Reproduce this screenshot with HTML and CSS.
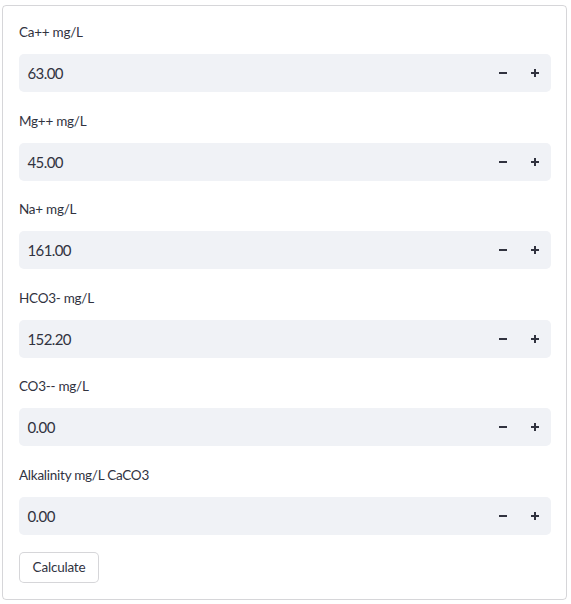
FILE: index.html
```html
<!DOCTYPE html>
<html>
<head>
<meta charset="utf-8">
<link rel="stylesheet" href="styles.css">
</head>
<body>
<form class="form">
  <div class="field">
    <label class="label">Ca++ mg/L</label>
    <div class="input">
      <span class="value">63.00</span>
      <button type="button" class="step"><svg width="10" height="10" viewBox="0 0 10 10"><path d="M1 5h8" stroke="#31333f" stroke-width="2"/></svg></button>
      <button type="button" class="step"><svg width="10" height="10" viewBox="0 0 10 10"><path d="M1 5h8M5 1v8" stroke="#31333f" stroke-width="2"/></svg></button>
    </div>
  </div>
  <div class="field">
    <label class="label">Mg++ mg/L</label>
    <div class="input">
      <span class="value">45.00</span>
      <button type="button" class="step"><svg width="10" height="10" viewBox="0 0 10 10"><path d="M1 5h8" stroke="#31333f" stroke-width="2"/></svg></button>
      <button type="button" class="step"><svg width="10" height="10" viewBox="0 0 10 10"><path d="M1 5h8M5 1v8" stroke="#31333f" stroke-width="2"/></svg></button>
    </div>
  </div>
  <div class="field">
    <label class="label">Na+ mg/L</label>
    <div class="input">
      <span class="value">161.00</span>
      <button type="button" class="step"><svg width="10" height="10" viewBox="0 0 10 10"><path d="M1 5h8" stroke="#31333f" stroke-width="2"/></svg></button>
      <button type="button" class="step"><svg width="10" height="10" viewBox="0 0 10 10"><path d="M1 5h8M5 1v8" stroke="#31333f" stroke-width="2"/></svg></button>
    </div>
  </div>
  <div class="field">
    <label class="label">HCO3- mg/L</label>
    <div class="input">
      <span class="value">152.20</span>
      <button type="button" class="step"><svg width="10" height="10" viewBox="0 0 10 10"><path d="M1 5h8" stroke="#31333f" stroke-width="2"/></svg></button>
      <button type="button" class="step"><svg width="10" height="10" viewBox="0 0 10 10"><path d="M1 5h8M5 1v8" stroke="#31333f" stroke-width="2"/></svg></button>
    </div>
  </div>
  <div class="field">
    <label class="label">CO3-- mg/L</label>
    <div class="input">
      <span class="value">0.00</span>
      <button type="button" class="step"><svg width="10" height="10" viewBox="0 0 10 10"><path d="M1 5h8" stroke="#31333f" stroke-width="2"/></svg></button>
      <button type="button" class="step"><svg width="10" height="10" viewBox="0 0 10 10"><path d="M1 5h8M5 1v8" stroke="#31333f" stroke-width="2"/></svg></button>
    </div>
  </div>
  <div class="field">
    <label class="label">Alkalinity mg/L CaCO3</label>
    <div class="input">
      <span class="value">0.00</span>
      <button type="button" class="step"><svg width="10" height="10" viewBox="0 0 10 10"><path d="M1 5h8" stroke="#31333f" stroke-width="2"/></svg></button>
      <button type="button" class="step"><svg width="10" height="10" viewBox="0 0 10 10"><path d="M1 5h8M5 1v8" stroke="#31333f" stroke-width="2"/></svg></button>
    </div>
  </div>
  <div class="actions">
    <button type="button" class="submit">Calculate</button>
  </div>
</form>
</body>
</html>
```

FILE: styles.css
```css
* { box-sizing: border-box; }
html, body { margin: 0; background: #ffffff; }
body {
  padding: 5px 0 0 2px;
  font-family: "Lato", "Liberation Sans", sans-serif;
  color: #31333f;
}
.form {
  width: 565px;
  height: 595px;
  border: 1px solid rgba(49, 51, 63, 0.2);
  border-radius: 4px;
  padding: 16px 15px 15px 16px;
  display: flex;
  flex-direction: column;
  gap: 18.6px;
}
.field {
  display: flex;
  flex-direction: column;
}
.label {
  display: block;
  height: 32px;
  font-size: 13.5px;
  letter-spacing: -0.25px;
  line-height: 21px;
}
.input {
  height: 38px;
  background: #f0f2f6;
  border-radius: 5px;
  display: flex;
  align-items: center;
  padding-left: 8.5px;
}
.value {
  flex: 1;
  font-size: 15px;
  letter-spacing: -0.6px;
  line-height: 20px;
}
.step {
  width: 32px;
  height: 38px;
  border: 0;
  background: transparent;
  padding: 0;
  display: flex;
  align-items: center;
  justify-content: center;
}
.actions {
  margin-top: -1.6px;
}
.submit {
  height: 31px;
  width: 80px;
  padding: 0;
  background: #ffffff;
  border: 1px solid rgba(49, 51, 63, 0.2);
  border-radius: 5px;
  font-family: "Lato", "Liberation Sans", sans-serif;
  font-size: 13.5px;
  letter-spacing: -0.2px;
  color: #31333f;
}
```
